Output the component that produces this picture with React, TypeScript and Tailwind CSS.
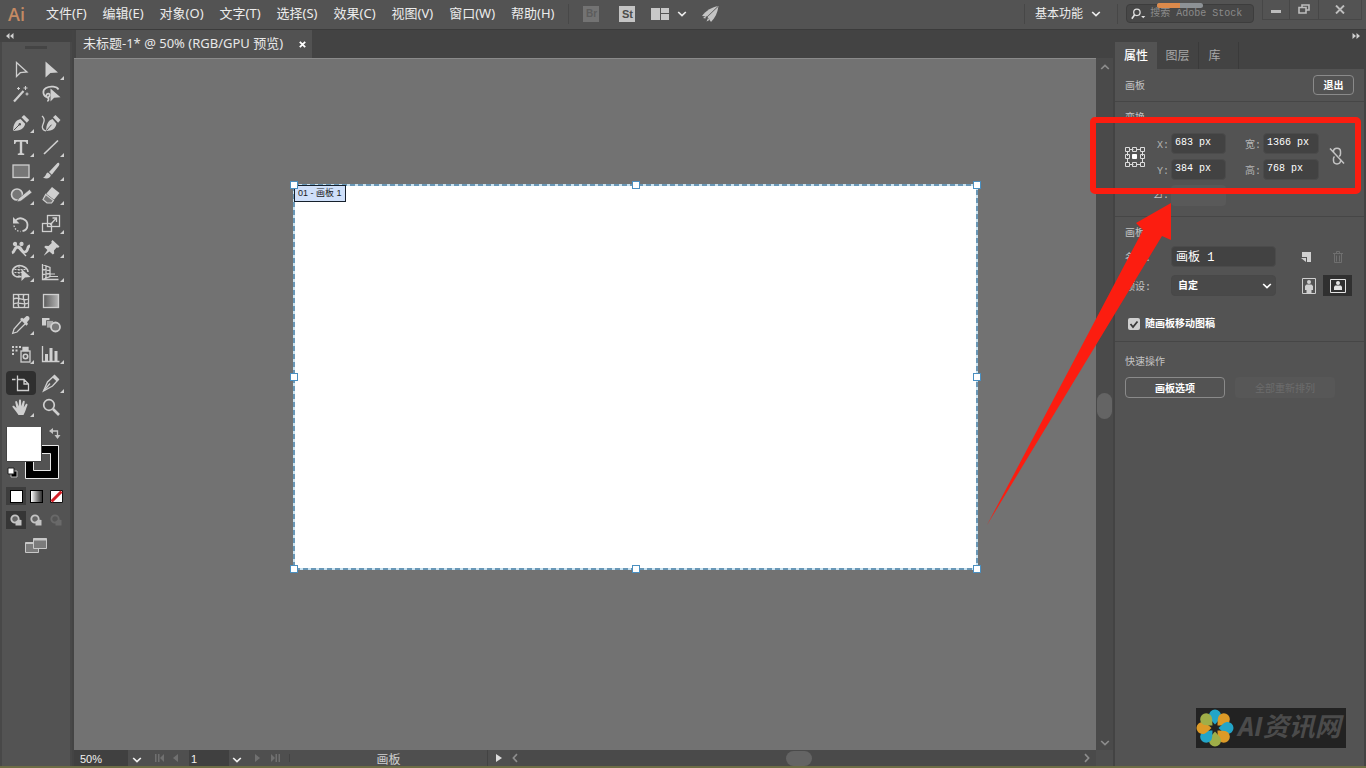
import React, { useState } from "react";
import clsx from "clsx";

type IconProps = {
  children: React.ReactNode;
  size?: number;
};

const Icon = ({ children, size = 24 }: IconProps) => (
  <svg
    width={size}
    height={size}
    viewBox={`0 0 ${size} ${size}`}
    fill="none"
    stroke="currentColor"
    strokeWidth="1.3"
    aria-hidden="true"
  >
    {children}
  </svg>
);

const Chevron = ({ className }: { className?: string }) => (
  <svg width="10" height="6" viewBox="0 0 10 6" fill="none" className={className} aria-hidden="true">
    <path d="M1.2 1 5 4.6 8.8 1" stroke="currentColor" strokeWidth="1.7" />
  </svg>
);

type Tool = {
  name: string;
  more?: boolean;
  icon: React.ReactNode;
};

const toolGroups: Tool[][] = [
  [
    {
      name: "选择工具",
      icon: <path d="M7.5 4.500v14l3.800-3.800 6.700-.7z" />,
    },
    {
      name: "直接选择工具",
      more: true,
      icon: <path d="M6.500 3.500v16l4.900-4.500 7.600-.4z" fill="currentColor" stroke="none" />,
    },
    {
      name: "魔棒工具",
      icon: (
        <>
          <path d="M5 19.5 14.5 9" strokeWidth="2.2" />
          <path d="M16.5 4v4M14.5 6h4M9.5 5v3M8 6.5h3M18 10.5v3M16.5 12h3" strokeWidth="1.1" />
        </>
      ),
    },
    {
      name: "套索工具",
      icon: (
        <>
          <path d="M8.5 15.5C3.8 14 2.8 8.500 7 6s11-1.500 12.500 1.500M8.500 15.500c2.500-.5 3-3.500.8-3.800s-3 3.300 0 4.500c.8 1.500 0 2.500-1 3" strokeWidth="1.7" />
          <path d="M11.500 6.500v13l3.600-3.700 6.400-.5z" fill="currentColor" stroke="none" />
        </>
      ),
    },
  ],
  [
    {
      name: "钢笔工具",
      more: true,
      icon: (
        <>
          <path d="M4 20c.3-6.500 2-10.500 7.500-12l4.700 4.700c-1.200 5.300-5 7-12.200 7.300z" fill="currentColor" stroke="none" />
          <path d="M12.500 6.300 15 4l5.200 5-2.400 2.700z" fill="currentColor" stroke="none" />
          <path d="m4.500 19.500 5.800-5.800" stroke="#535353" strokeWidth="1" />
          <circle cx="10.800" cy="13.200" r="1.200" fill="#535353" stroke="none" />
        </>
      ),
    },
    {
      name: "曲率工具",
      icon: (
        <>
          <path d="M7 20c.3-6.500 2-10.500 6.500-12l4 4.700c-1.200 5.300-4 7-10.500 7.300z" fill="currentColor" stroke="none" />
          <path d="M14 6.300 16.500 4l5 5-2.400 2.700z" fill="currentColor" stroke="none" />
          <path d="m7.500 19.500 5-5.800" stroke="#535353" strokeWidth="1" />
          <path d="M3 5c2.500 2 2.800 4 1.500 7S2 18.500 7 20" />
        </>
      ),
    },
    {
      name: "文字工具",
      more: true,
      icon: (
        <path
          d="M5 5h14v4h-1.300c-.3-1.700-1-2.200-2.300-2.200h-2.200v10.400c0 1 .6 1.300 2 1.300V20H8.800v-1.500c1.400 0 2-.3 2-1.300V6.800H8.600C7.300 6.800 6.600 7.300 6.300 9H5z"
          fill="currentColor"
          stroke="none"
        />
      ),
    },
    {
      name: "直线段工具",
      more: true,
      icon: <path d="M5 19 19 5.500" strokeWidth="1.700" />,
    },
    {
      name: "矩形工具",
      more: true,
      icon: <rect x="4" y="6" width="16" height="12.500" fill="#777" />,
    },
    {
      name: "画笔工具",
      more: true,
      icon: (
        <>
          <path d="M20 4c-1-.5-1.500 0-2.500 1l-7.500 8 2.800 2.700 6.700-8.500C20.500 6 20.600 5 20 4z" fill="currentColor" stroke="none" />
          <path d="M9 13.500c-2.500.5-1.500 4-5 5 3.500 2 7.500.8 7.800-2.500z" fill="currentColor" stroke="none" />
        </>
      ),
    },
    {
      name: "Shaper 工具",
      more: true,
      icon: (
        <>
          <circle cx="8" cy="11.500" r="5.500" fill="#777" strokeWidth="1.600" />
          <path d="m8 19 1.500-3.500L20.500 6.500l2.500 3L12 18z" fill="currentColor" stroke="#535353" strokeWidth=".6" />
        </>
      ),
    },
    {
      name: "橡皮擦工具",
      more: true,
      icon: (
        <>
          <path d="m13 4 7.500 6-5.500 6.800-7.700-6z" fill="currentColor" stroke="none" />
          <path d="m6.700 11.500 7.700 6-1.900 2.500H8l-4-3.500z" fill="#777" strokeWidth="1.200" />
        </>
      ),
    },
  ],
  [
    {
      name: "旋转工具",
      more: true,
      icon: (
        <>
          <path d="M6.500 8.500c4-4.500 12-1.500 12 4.500 0 3-2 5.500-5 6.200" strokeWidth="1.800" />
          <path d="M4 5v6.500h6.500z" fill="currentColor" stroke="none" />
          <path d="M5 13.500c.5 3.500 3 5.700 6.500 6" strokeDasharray="1.500 1.500" />
        </>
      ),
    },
    {
      name: "比例缩放工具",
      more: true,
      icon: (
        <>
          <rect x="8.500" y="3.500" width="12" height="11" />
          <rect x="3.500" y="11.500" width="9" height="8" />
          <path d="m11 13 6-6.500M13.500 6h4v4" />
        </>
      ),
    },
    {
      name: "宽度工具",
      more: true,
      icon: (
        <>
          <path d="M3 17c3-1 2-6 6-6s3 6 7 5 1.500-6 5-6" strokeWidth="2.800" />
          <path d="M5 7.500 17 20" />
          <circle cx="6" cy="8" r="1.500" fill="currentColor" />
          <circle cx="12.500" cy="8" r="1.500" fill="currentColor" />
        </>
      ),
    },
    {
      name: "操控变形工具",
      more: true,
      icon: (
        <path d="m13.500 4 7 6.500-1.300 1.200-1.600-.3-2.600 3.200.2 2.800-1.400 1.200-3.400-3L4.500 20l3.900-6-3.200-3 1.300-1.300 3 .2 3.200-2.800-.4-1.700z" fill="currentColor" stroke="none" />
      ),
    },
    {
      name: "形状生成器工具",
      more: true,
      icon: (
        <>
          <path d="M12.500 16.500C7 18 3 15 3.500 11s6-6.500 9.500-5 6 2.500 6 6" strokeWidth="1.600" />
          <path d="M5.500 9.500h11M5.500 12.500h8M10 6v10" strokeDasharray="2 1" strokeWidth="1" />
          <path d="M12.500 9v12l3.500-3.500 5.500-.5z" fill="currentColor" stroke="none" />
        </>
      ),
    },
    {
      name: "透视网格工具",
      more: true,
      icon: (
        <>
          <path d="M3.500 4v15.500h16M3.500 4.500l7.500 3v9l-7.500 3M7 6v12M3.500 9.500l7.500 1M3.500 14.500l7.500-1" />
          <path d="M11 14h5M10 16.500h9" strokeWidth="1" />
        </>
      ),
    },
  ],
  [
    {
      name: "网格工具",
      icon: (
        <>
          <rect x="4.500" y="5.500" width="15" height="13" />
          <path d="M4.500 10c5-3 9 3 15 0M4.500 15c5-3 9 2 15-1M9 5.500c3 4-2 8 1 13M15 5.500c-3 4 3 8 0 13" />
        </>
      ),
    },
    {
      name: "渐变工具",
      icon: (
        <>
          <defs>
            <linearGradient id="toolGradient">
              <stop offset="0" stopColor="#5a5a5a" />
              <stop offset="1" stopColor="#b5b5b5" />
            </linearGradient>
          </defs>
          <rect x="4.500" y="5.500" width="15" height="13" fill="url(#toolGradient)" />
        </>
      ),
    },
    {
      name: "吸管工具",
      more: true,
      icon: (
        <>
          <path d="m13 7-8 9-1.300 4.300L8 19l8.500-8.500" />
          <path d="m11 6 2-1.300 1.500 1L17 3.500c2-1.300 4.300 1 3.300 3L18 9.300l1 1.700-1.500 1.700z" fill="currentColor" stroke="none" />
        </>
      ),
    },
    {
      name: "混合工具",
      icon: (
        <>
          <path d="M3 5h7.500v7.500H3z" fill="currentColor" stroke="none" />
          <path d="M7.500 7.500H14.500V15H7.500z" fill="#aaa" stroke="#535353" strokeWidth=".8" />
          <circle cx="16.500" cy="14" r="4.500" fill="#777" strokeWidth="1.800" />
        </>
      ),
    },
  ],
  [
    {
      name: "符号喷枪工具",
      more: true,
      icon: (
        <>
          <rect x="12" y="9" width="9" height="11" />
          <path d="M14 8.500V5.500h5v3z" fill="currentColor" />
          <circle cx="16.500" cy="14.500" r="2.200" strokeWidth="1.600" />
          <path d="M3 4h2v2H3zM6.500 4h2v2h-2zM10 4h2v2h-2zM3 7.500h2v2H3zM6.500 7.500h2v2h-2zM3 11h2v2H3z" fill="currentColor" stroke="none" />
        </>
      ),
    },
    {
      name: "柱形图工具",
      more: true,
      icon: (
        <>
          <path d="M3.500 4v15.500h17" />
          <path d="M6 12h3v7H6zM10.500 6h3v13h-3zM15.500 9h3v10h-3z" fill="currentColor" stroke="none" />
        </>
      ),
    },
  ],
  [
    {
      name: "画板工具",
      icon: (
        <>
          <path d="M8.500 4.500v4M3 8.500h3.500" />
          <path d="M8.500 8.500h6.500l4.500 4.500v6.500h-11zM15 8.500V13h4.500" />
        </>
      ),
    },
    {
      name: "切片工具",
      more: true,
      icon: (
        <>
          <path d="m4.500 20 4-9 7-6.500 4 4-6 6.500z" />
          <path d="m15.500 4 4.500 4.300-2.200 2.300-4.600-4.300z" fill="currentColor" stroke="none" />
          <path d="m5 19.500 6-7" />
        </>
      ),
    },
    {
      name: "抓手工具",
      more: true,
      icon: (
        <path
          d="M9.500 20 7 16.500 3.500 12c-.5-1.200 1-1.800 2-.8l2 2L6.300 7.500C6 6 7.700 5.500 8.200 7l1.500 4.500.3-6c0-1.500 2-1.500 2 0l.3 5.800 1.500-4.800c.5-1.300 2.200-.8 1.900.6l-1 5.400 2-3.200c.8-1 2.200-.3 1.700.9-1.500 3.500-1.900 6.300-3.900 9.800z"
          fill="currentColor"
          stroke="none"
        />
      ),
    },
    {
      name: "缩放工具",
      icon: (
        <>
          <circle cx="10" cy="10" r="5.300" strokeWidth="1.700" />
          <path d="m14 14 6 6" strokeWidth="2.600" />
        </>
      ),
    },
  ],
];

const menus = [
  "文件(F)",
  "编辑(E)",
  "对象(O)",
  "文字(T)",
  "选择(S)",
  "效果(C)",
  "视图(V)",
  "窗口(W)",
  "帮助(H)",
];

const MenuBar = () => (
  <header className="flex h-[29px] shrink-0 items-center bg-[#535353] pb-0.5 text-[13px] text-[#ececec]">
    <span className="w-[38px] pl-2 font-['Open_Sans'] text-lg leading-6 font-semibold text-[#c48a63]">Ai</span>
    <nav className="flex">
      {menus.map((menu) => (
        <button key={menu} className="px-2 whitespace-nowrap">
          {menu}
        </button>
      ))}
    </nav>
    <div className="ml-1.5 flex items-center">
      <span className="h-5 w-px bg-[#484848]" />
      <button className="ml-3.5 h-4 w-4 bg-[#737373] font-['Liberation_Sans'] text-[10px] leading-4 font-bold text-[#5c5c5c]">
        Br
      </button>
      <button className="ml-5 h-4 w-4 bg-[#c4c4c4] font-['Liberation_Sans'] text-[11px] leading-4 font-bold text-[#4b4b4b]">
        St
      </button>
      <button className="ml-4 flex items-center gap-2" aria-label="排列文档">
        <svg width="18" height="12" viewBox="0 0 18 12" fill="#c8c8c8" aria-hidden="true">
          <path d="M0 0h9v12H0zM10 0h8v5h-8zM10 6h8v6h-8z" />
        </svg>
        <Chevron />
      </button>
      <button className="ml-3.5" aria-label="GPU 性能">
        <svg width="18" height="18" viewBox="0 0 18 18" fill="#c4c4c4" aria-hidden="true">
          <path d="M17.500 1C11 2 5 5.500 1 11l5 .5z" />
          <path d="M17.500 1 6 11.500l2 2.500 2 3C14 13 16.500 8 17.500 1z" />
          <path d="m5 10.500-3 2.500 2.500.5zM7 13l-1.500 3.500L8.500 15z" />
          <path d="M17 1.500 5 13" stroke="#535353" strokeWidth=".8" />
        </svg>
      </button>
    </div>
    <div className="ml-auto flex items-center">
      <span className="h-5 w-px bg-[#474747]" />
      <button className="ml-2.5 flex items-center gap-2 text-xs">
        基本功能
        <Chevron />
      </button>
      <span className="ml-4 h-5 w-px bg-[#474747]" />
      <label className="relative ml-2 flex h-[19px] w-[128px] items-center rounded-sm border border-[#3d3d3d] bg-[#474747] pl-1">
        <svg width="18" height="14" viewBox="0 0 18 14" fill="none" stroke="#e0e0e0" aria-hidden="true">
          <circle cx="7" cy="5" r="3.800" strokeWidth="1.500" />
          <path d="M4.300 8 1 12.500" strokeWidth="2" />
          <path d="M12 9.500h5L14.500 12z" fill="#e0e0e0" stroke="none" />
        </svg>
        <input
          aria-label="搜索 Adobe Stock"
          placeholder="搜索 Adobe Stock"
          className="ml-1 w-full min-w-0 bg-transparent font-['Liberation_Mono','Noto_Sans_CJK_SC',monospace] text-[10px] outline-none placeholder:text-[#8b8b8b]"
        />
        <span className="absolute top-[-2px] left-[30px] flex h-[5px] w-[46px] overflow-hidden rounded-full bg-[#8d9296]">
          <span className="w-1/2 bg-[#dd8a4b]" />
        </span>
      </label>
      <div className="mr-1 mb-2 ml-2 flex h-5 text-[#bdbdbd]">
        <button className="flex w-[28px] items-center justify-center border-r border-b border-l border-[#474747]" aria-label="最小化">
          <span className="mt-1 h-[3px] w-2.5 bg-current" />
        </button>
        <button className="flex w-[28px] items-center justify-center border-b border-[#474747]" aria-label="还原">
          <svg width="12" height="10" viewBox="0 0 12 10" fill="none" stroke="currentColor" strokeWidth="1.600" aria-hidden="true">
            <path d="M4 3V1h7v5H8M1 3.500h7V9H1z" />
          </svg>
        </button>
        <button className="flex w-[44px] items-center justify-center border-r border-b border-l border-[#474747]" aria-label="关闭">
          <svg width="10" height="9" viewBox="0 0 10 9" stroke="currentColor" strokeWidth="1.900" aria-hidden="true">
            <path d="m1 .5 8 8M9 .5l-8 8" />
          </svg>
        </button>
      </div>
    </div>
  </header>
);

const ToolBar = () => {
  const [active, setActive] = useState("画板工具");

  return (
    <aside className="flex w-[74px] shrink-0 flex-col border-r-2 border-[#444] bg-[#535353] text-[#cfcfcf]">
      <div className="flex h-3 items-center bg-[#434343] pl-1.5">
        <svg width="8" height="6" viewBox="0 0 8 6" fill="#d0d0d0" aria-hidden="true">
          <path d="M3.500 0v6L0 3zM7.500 0v6L4 3z" />
        </svg>
      </div>
      <div className="flex flex-1 flex-col border-x-2 border-[#484848] px-1">
        <div className="mx-auto mt-1 mb-[9px] h-[3px] w-[22px] bg-[#444]" />
        <div className="flex flex-col gap-[5px]">
          {toolGroups.map((group) => (
            <div key={group[0].name} className="grid grid-cols-2">
              {group.map((tool) => (
                <button
                  key={tool.name}
                  aria-label={tool.name}
                  onClick={() => setActive(tool.name)}
                  className={clsx(
                    "relative flex h-6 items-center justify-center rounded-sm",
                    active === tool.name && "bg-[#2f2f2f]"
                  )}
                >
                  <Icon>{tool.icon}</Icon>
                  {tool.more && (
                    <svg width="4" height="4" viewBox="0 0 4 4" className="absolute right-0.5 bottom-0.5" aria-hidden="true">
                      <path d="M4 0v4H0z" fill="#cfcfcf" />
                    </svg>
                  )}
                </button>
              ))}
            </div>
          ))}
        </div>

        {/* Fill and stroke */}
        <svg width="56" height="54" viewBox="0 0 56 54" className="mt-2" aria-hidden="true">
          <path d="M19.500 18.500h33v33h-33z" fill="#000" stroke="#e8e8e8" />
          <path d="M27.500 26.500h17v17h-17z" fill="#535353" stroke="#e8e8e8" />
          <path d="M.5-.5h35v35H.5z" fill="#fff" stroke="#444" />
          <path d="M46 4h5.500v5" fill="none" stroke="#c4c4c4" strokeWidth="1.300" />
          <path d="M47 1v6l-4-3zM48.500 8h6l-3 4z" fill="#c4c4c4" />
          <path d="M5 44h6v6H5z" fill="#000" stroke="#bbb" />
          <path d="M2 41h6v6H2z" fill="#fff" stroke="#222" />
        </svg>

        <div className="mt-1.5 grid grid-cols-3">
          <button className="flex h-[18px] items-center justify-center bg-[#3d3d3d]" aria-label="颜色">
            <span className="size-[13px] border border-black bg-white" />
          </button>
          <button className="flex h-[18px] items-center justify-center" aria-label="渐变">
            <span className="size-[13px] border border-black bg-linear-to-r from-white to-[#333]" />
          </button>
          <button className="flex h-[18px] items-center justify-center" aria-label="无">
            <svg width="13" height="13" viewBox="0 0 13 13" aria-hidden="true">
              <path d="M.5.5h12v12H.5z" fill="#fff" stroke="#111" />
              <path d="M1.500 11.500l10-10" stroke="#d22027" strokeWidth="3" />
            </svg>
          </button>
        </div>
        <div className="mt-1.5 grid grid-cols-3">
          {["正常绘图", "背面绘图", "内部绘图"].map((mode, index) => (
            <button
              key={mode}
              aria-label={mode}
              className={clsx(
                "flex h-[18px] items-center justify-center",
                index === 0 && "bg-[#363636]",
                index === 2 && "opacity-20"
              )}
            >
              <svg width="12" height="12" viewBox="0 0 12 12" aria-hidden="true">
                <circle cx="5" cy="5" r="3.700" fill="#666" stroke="#c4c4c4" strokeWidth="1.800" />
                <path d="M5.500 7.500 8.500 5.500 11.500 6v5.500h-6z" fill="#c4c4c4" />
              </svg>
            </button>
          ))}
        </div>
        <button className="mx-auto mt-2" aria-label="更改屏幕模式">
          <svg width="24" height="17" viewBox="0 0 24 17" fill="#7b7b7b" stroke="#c8c8c8" aria-hidden="true">
            <path d="M1.500 5.500h13v10h-13z" />
            <path d="M1.500 6.500h13" />
            <path d="M9.500 1.500h13v10h-13z" />
            <path d="M9.500 2.500h13" strokeWidth="2" />
          </svg>
        </button>
      </div>
    </aside>
  );
};

const handles = [
  "top-0 left-0",
  "top-0 left-1/2",
  "top-0 left-full",
  "top-1/2 left-0",
  "top-1/2 left-full",
  "top-full left-0",
  "top-full left-1/2",
  "top-full left-full",
];

const Canvas = () => (
  <div className="relative min-w-0 flex-1 overflow-hidden border-t border-[#8a8a8a] bg-[#727272]">
    <div className="absolute top-[126px] left-[220px] h-[384px] w-[683px] bg-white">
      <svg className="absolute inset-0 h-full w-full overflow-visible" fill="none" aria-hidden="true">
        <rect width="100%" height="100%" stroke="#c9e2f0" strokeWidth="2" />
        <rect width="100%" height="100%" stroke="#4a7fa2" strokeWidth="1.500" strokeDasharray="5 3" />
      </svg>
      <div className="absolute top-0 left-0 h-[17px] border border-[#16202c] bg-[#cfe0fa] px-[3px] font-['Liberation_Sans','Noto_Sans_CJK_SC',sans-serif] text-[9px] leading-[14px] whitespace-nowrap text-[#1c1c1c]">
        01 - 画板 1
      </div>
      {handles.map((position) => (
        <span
          key={position}
          className={clsx("absolute size-2 -translate-1/2 border border-[#4a8fc0] bg-white", position)}
        />
      ))}
    </div>
  </div>
);

const VerticalScroll = () => (
  <div className="flex w-[17px] shrink-0 flex-col items-center bg-[#4a4a4a] pt-1.5 pb-1 text-[#8c8c8c]">
    <Chevron className="rotate-180" />
    <span className="mt-[323px] h-[26px] w-[15px] rounded-full bg-[#646464]" />
    <Chevron className="mt-auto" />
  </div>
);

const StatusBar = () => (
  <footer className="flex h-4 shrink-0 items-center bg-[#4f4f4f] font-['Liberation_Sans','Noto_Sans_CJK_SC',sans-serif] text-[11px] text-[#f0f0f0]">
    <input aria-label="缩放" defaultValue="50%" className="h-full w-[54px] bg-[#404040] pt-0.5 pl-1.5 outline-none" />
    <button className="flex h-full w-[17px] items-center justify-center pt-1" aria-label="缩放级别">
      <Chevron />
    </button>
    <div className="flex w-[44px] items-center justify-center gap-2 text-[#707070]">
      <button aria-label="首项">
        <svg width="10" height="8" viewBox="0 0 10 8" fill="currentColor" aria-hidden="true">
          <path d="M0 0h1.500v8H0zM3 0h1.500v8H3zM9 0v8L5 4z" />
        </svg>
      </button>
      <button aria-label="上一项">
        <svg width="6" height="8" viewBox="0 0 6 8" fill="currentColor" aria-hidden="true">
          <path d="M5 0v8L0 4z" />
        </svg>
      </button>
    </div>
    <input aria-label="画板导航" defaultValue="1" className="h-full w-[40px] bg-[#404040] pt-0.5 pl-0.5 outline-none" />
    <button className="flex h-full w-[15px] items-center justify-center pt-1" aria-label="画板列表">
      <Chevron />
    </button>
    <div className="flex w-[46px] items-center justify-center gap-2.5 border-r border-[#434343] text-[#707070]">
      <button aria-label="下一项">
        <svg width="6" height="8" viewBox="0 0 6 8" fill="currentColor" aria-hidden="true">
          <path d="M1 0v8l5-4z" />
        </svg>
      </button>
      <button aria-label="末项">
        <svg width="10" height="8" viewBox="0 0 10 8" fill="currentColor" aria-hidden="true">
          <path d="M1 0v8l4-4zM5.500 0H7v8H5.500zM8.500 0H10v8H8.500z" />
        </svg>
      </button>
    </div>
    <div className="w-[198px] border-r border-[#434343] pt-1 text-center text-xs leading-4 text-[#cfcfcf]">画板</div>
    <button className="flex w-[22px] justify-center" aria-label="状态栏菜单">
      <svg width="6" height="8" viewBox="0 0 6 8" fill="#dcdcdc" aria-hidden="true">
        <path d="M0 0v8l6-4z" />
      </svg>
    </button>
    <div className="relative flex h-full min-w-0 flex-1 items-center justify-between bg-[#4a4a4a] text-[#8c8c8c]">
      <Chevron className="rotate-90" />
      <Chevron className="mr-1 -rotate-90" />
      <span className="absolute left-[276px] h-[15px] w-[26px] rounded-full bg-[#646464]" />
    </div>
    <span className="w-[17px]" />
  </footer>
);

type FieldProps = {
  id: string;
  label: string;
  value: string;
};

const Field = ({ id, label, value }: FieldProps) => (
  <>
    <label htmlFor={id} className="pt-1 pr-0.5 text-right whitespace-nowrap text-[#b4b4b4]">
      {label}
    </label>
    <input
      id={id}
      defaultValue={value}
      className="h-[21px] w-full min-w-0 rounded-sm border border-[#4b4b4b] bg-[#424242] pb-0.5 pl-[3px] text-white outline-none"
    />
  </>
);

const ReferencePoint = () => (
  <svg width="20" height="20" viewBox="0 0 20 20" fill="none" stroke="#dcdcdc" aria-hidden="true">
    <path d="M4.500 2.500h4M11.500 2.500h4M4.500 17.500h4M11.500 17.500h4M2.500 5v4M2.500 12v4M17.500 5v4M17.500 12v4" />
    <path d="M.5.500h4v4h-4zM7.500.5h4v4h-4zM15.500.5h4v4h-4zM.5 7.500h4v4h-4zM15.500 7.500h4v4h-4zM.5 15.500h4v4h-4zM7.500 15.500h4v4h-4zM15.500 15.500h4v4h-4z" />
    <path d="M7.500 7.500h4v4h-4z" fill="#fff" stroke="#fff" />
  </svg>
);

const PropertiesPanel = () => {
  const [moveArt, setMoveArt] = useState(true);

  return (
    <aside className="flex w-[253px] shrink-0 flex-col border-x-2 border-[#434343] bg-[#535353] font-['Liberation_Mono','Noto_Sans_CJK_SC',monospace] text-[10px] leading-4 text-[#c4c4c4]">
      <div className="flex h-3 items-center justify-end bg-[#434343] pr-1">
        <svg width="8" height="6" viewBox="0 0 8 6" fill="#d0d0d0" aria-hidden="true">
          <path d="M.5 0v6L4 3zM4.500 0v6L8 3z" />
        </svg>
      </div>
      <div className="flex h-[27px] bg-[#434343] text-xs text-[#a8a8a8]">
        <button className="w-[42px] bg-[#535353] pt-0.5 font-medium text-white">属性</button>
        <button className="w-[42px] border-r border-[#3a3a3a] pt-0.5">图层</button>
        <button className="w-[40px] border-r border-[#3a3a3a] pt-0.5 pr-2">库</button>
      </div>

      <section className="flex h-[33px] items-center justify-between border-b border-[#464646] px-2.5">
        <h2 className="pt-1">画板</h2>
        <button className="h-5 w-[41px] rounded-sm border border-[#8a8a8a] pt-1 leading-3 font-bold text-white">
          退出
        </button>
      </section>

      <section className="border-b border-[#464646] px-2.5 pt-[9px] pb-2.5">
        <h2>变换</h2>
        <div className="mt-1.5 flex items-start">
          <button className="mt-3.5" aria-label="参考点">
            <ReferencePoint />
          </button>
          <div className="grid grid-cols-[26px_55px_37px_56px] items-center gap-y-[5px]">
            <Field id="pos-x" label="X:" value="683 px" />
            <Field id="width" label="宽:" value="1366 px" />
            <Field id="pos-y" label="Y:" value="384 px" />
            <Field id="height" label="高:" value="768 px" />
            <label htmlFor="angle" className="pr-0.5 text-right">
              ⊿:
            </label>
            <select id="angle" disabled className="h-[21px] appearance-none rounded-sm bg-[#595959]" />
          </div>
          <button className="mt-3.5 ml-2.5" aria-label="约束宽度和高度比例">
            <svg width="16" height="18" viewBox="0 0 16 18" fill="none" stroke="#c4c4c4" strokeWidth="1.500" aria-hidden="true">
              <path d="M4.500 6V4.500c0-4.500 7-4.500 7 0V7c0 1-.7 2-1.500 2.300M5.500 9.500c-.7.700-1 1.300-1 2v2c0 4.500 7 4.500 7 0V12M1 1.500l14 15" />
            </svg>
          </button>
        </div>
      </section>

      <section className="border-b border-[#464646] px-2.5 pt-[9px] pb-2">
        <h2>画板</h2>
        <div className="mt-1 flex items-center">
          <label htmlFor="artboard-name" className="w-[46px] pt-1 whitespace-nowrap">
            名称:
          </label>
          <input
            id="artboard-name"
            defaultValue="画板 1"
            className="h-[21px] w-[105px] rounded-sm border border-[#4b4b4b] bg-[#424242] pb-0.5 pl-1 text-xs text-white outline-none"
          />
          <button className="ml-6" aria-label="新建画板">
            <svg width="12" height="12" viewBox="0 0 12 12" fill="#d0d0d0" aria-hidden="true">
              <path d="M2 1h9v10H7V6H2z" />
              <path d="M1 7h5v4z" />
            </svg>
          </button>
          <button className="ml-5 opacity-30" aria-label="删除画板">
            <svg width="12" height="14" viewBox="0 0 12 14" fill="none" stroke="#b0b0b0" aria-hidden="true">
              <path d="M1 3.500h10M4.500 3V1.500h3V3M2.500 4v8.500h7V4M4.500 5.500v6M7.500 5.500v6" />
            </svg>
          </button>
        </div>
        <div className="mt-2 flex items-center">
          <label htmlFor="preset" className="w-[46px] pt-1 whitespace-nowrap">
            预设:
          </label>
          <div className="relative w-[105px]">
            <select
              id="preset"
              className="h-[21px] w-full appearance-none rounded-sm border border-[#484848] bg-[#494949] pt-0.5 pl-1.5 font-bold text-white"
            >
              <option>自定</option>
            </select>
            <Chevron className="pointer-events-none absolute top-2 right-1 text-white" />
          </div>
          <button className="ml-[18px] flex h-[21px] w-[29px] items-center justify-center" aria-label="纵向">
            <svg width="14" height="16" viewBox="0 0 14 16" fill="#cfcfcf" aria-hidden="true">
              <path d="M.5.5h13v15H.5z" fill="none" stroke="#cfcfcf" />
              <circle cx="7" cy="4" r="2" />
              <path d="M4.500 6.500h5L11 8v4H9.500v3h-5v-3H3V8z" />
            </svg>
          </button>
          <button className="flex h-[21px] w-[29px] items-center justify-center bg-[#303030]" aria-label="横向">
            <svg width="16" height="14" viewBox="0 0 16 14" fill="#e4e4e4" aria-hidden="true">
              <path d="M.5.500h15v13H.5z" fill="none" stroke="#e4e4e4" />
              <circle cx="8" cy="4" r="2" />
              <path d="M5 6.500h6l1 1.500v3H4V8z" />
            </svg>
          </button>
        </div>
        <label className="mt-[19px] flex items-center gap-[5px] pl-[3px] font-bold text-white">
          <span className="relative flex">
            <input
              type="checkbox"
              checked={moveArt}
              onChange={() => setMoveArt(!moveArt)}
              className="size-3 appearance-none rounded-xs bg-[#cfcfcf]"
            />
            {moveArt && (
              <svg width="12" height="12" viewBox="0 0 12 12" className="pointer-events-none absolute inset-0" fill="none" aria-hidden="true">
                <path d="m2.500 6 2.500 3L9.500 3.500" stroke="#3a3a3a" strokeWidth="1.800" />
              </svg>
            )}
          </span>
          <span className="pt-0.5">随画板移动图稿</span>
        </label>
      </section>

      <section className="px-2.5 pt-[13px]">
        <h2>快速操作</h2>
        <div className="mt-1.5 flex gap-2.5">
          <button className="h-[21px] w-[100px] rounded-sm border border-[#8a8a8a] pt-1 leading-3 font-bold text-white">
            画板选项
          </button>
          <button disabled className="h-[21px] w-[100px] rounded-sm bg-[#575757] pt-1 leading-3 text-[#6c6c6c]">
            全部重新排列
          </button>
        </div>
      </section>
    </aside>
  );
};

const petals = ["#23a5c8", "#dc9a27", "#23a5c8", "#dc9a27", "#9fae48", "#23a5c8", "#dc9a27", "#9fae48"];

const Watermark = () => (
  <div className="absolute right-5 bottom-[18px] flex h-10 w-[150px] items-center gap-1 bg-[#222] text-[#4b4b4b]">
    <svg width="38" height="38" viewBox="-19 -19 38 38" className="shrink-0" aria-hidden="true">
      {petals.map((color, index) => (
        <path
          key={index}
          d="M0-3.500C-4-8-6-9.500-6-12.500a6 6 0 0 1 12 0C6-9.500 4-8 0-3.500z"
          fill={color}
          transform={`rotate(${index * 45})`}
        />
      ))}
    </svg>
    <span className="pb-1 font-['Open_Sans','Noto_Sans_CJK_SC',sans-serif] text-[26px] leading-8 font-bold whitespace-nowrap italic">
      AI资讯网
    </span>
  </div>
);

// Red frame around the size fields and the arrow pointing at it
const Callout = () => (
  <svg width="386" height="420" viewBox="0 0 386 420" className="pointer-events-none absolute top-[110px] right-0" aria-hidden="true">
    <rect x="113" y="10" width="265" height="71" rx="2" fill="none" stroke="#fc1d10" strokeWidth="6" />
    <path d="M7 415 163 120 156 113 191 93 191 130 182 126z" fill="#fc1d10" />
  </svg>
);

const App = () => (
  <div className="relative flex h-screen min-h-[600px] flex-col overflow-hidden border-b-2 border-[#6d6d45] bg-[#434343] font-['Noto_Sans','Noto_Sans_CJK_SC',sans-serif]">
    <MenuBar />
    <div className="flex min-h-0 flex-1 border-t border-[#3b3b3b]">
      <ToolBar />
      <main className="flex min-w-0 flex-1 flex-col">
        <div className="flex h-7 shrink-0 bg-[#434343]">
          <div className="ml-0.5 flex items-center gap-4 bg-[#525252] pr-1.5 pl-[7px] text-[13px] text-[#e8e8e8]">
            <span className="whitespace-nowrap">未标题-1* @ 50% (RGB/GPU 预览)</span>
            <button aria-label="关闭文档">
              <svg width="7" height="7" viewBox="0 0 7 7" stroke="#fff" strokeWidth="1.800" aria-hidden="true">
                <path d="m.8.8 5.400 5.400M6.200.8.800 6.200" />
              </svg>
            </button>
          </div>
        </div>
        <div className="flex min-h-0 flex-1">
          <Canvas />
          <VerticalScroll />
        </div>
        <StatusBar />
      </main>
      <PropertiesPanel />
    </div>
    <Callout />
    <Watermark />
  </div>
);

export default App;
